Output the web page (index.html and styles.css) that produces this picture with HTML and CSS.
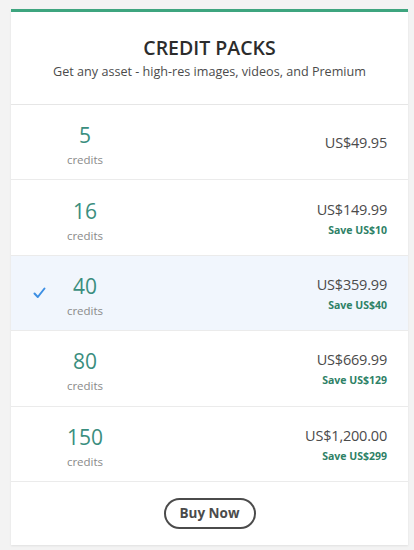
FILE: index.html
```html
<!DOCTYPE html>
<html>
<head>
<meta charset="utf-8">
<link rel="stylesheet" href="styles.css">
</head>
<body>
<div class="card">
  <div class="header">
    <h1 class="title">CREDIT PACKS</h1>
    <p class="subtitle">Get any asset - high-res images, videos, and Premium</p>
  </div>
  <div class="row">
    <div class="qty"><span class="num">5</span><span class="unit">credits</span></div>
    <div class="price"><span class="amount">US$49.95</span></div>
  </div>
  <div class="row">
    <div class="qty"><span class="num">16</span><span class="unit">credits</span></div>
    <div class="price"><span class="amount">US$149.99</span><span class="save">Save US$10</span></div>
  </div>
  <div class="row selected">
    <svg class="check" width="13" height="12" viewBox="0 0 13 12"><path d="M1.5 6.5 L4.8 10 L11.5 1.5" fill="none" stroke="#3d8fe3" stroke-width="2" stroke-linecap="round" stroke-linejoin="round"/></svg>
    <div class="qty"><span class="num">40</span><span class="unit">credits</span></div>
    <div class="price"><span class="amount">US$359.99</span><span class="save">Save US$40</span></div>
  </div>
  <div class="row">
    <div class="qty"><span class="num">80</span><span class="unit">credits</span></div>
    <div class="price"><span class="amount">US$669.99</span><span class="save">Save US$129</span></div>
  </div>
  <div class="row">
    <div class="qty"><span class="num">150</span><span class="unit">credits</span></div>
    <div class="price"><span class="amount">US$1,200.00</span><span class="save">Save US$299</span></div>
  </div>
  <div class="footer">
    <button class="buy">Buy Now</button>
  </div>
</div>
</body>
</html>
```
FILE: styles.css
```css
html, body {
  margin: 0;
  padding: 0;
}
body {
  background: #f3f3f3;
  font-family: "Open Sans", "Liberation Sans", sans-serif;
  color: #4b4b4b;
  padding: 9px 6px 5px 11px;
}
.card {
  background: #fff;
  border-top: 3px solid #3ea57f;
  box-shadow: 0 1px 2px rgba(0,0,0,0.08);
}
.header {
  height: 93px;
  box-sizing: border-box;
  padding-top: 23px;
  text-align: center;
  border-bottom: 1px solid #e6e6e6;
}
.title {
  margin: 0;
  font-size: 19.5px;
  font-weight: 600;
  line-height: 26px;
  color: #2c2c2c;
}
.subtitle {
  margin: 1px 0 0;
  font-size: 12.6px;
  line-height: 20px;
  color: #4b4b4b;
}
.row {
  position: relative;
  height: 75.4px;
  box-sizing: border-box;
  border-bottom: 1px solid #ebebeb;
  display: flex;
  align-items: center;
  justify-content: space-between;
}
.row.selected {
  background: #f1f6fd;
}
.check {
  position: absolute;
  left: 22px;
  top: 31px;
}
.qty {
  width: 148px;
  display: flex;
  flex-direction: column;
  align-items: center;
  padding-top: 6px;
}
.num {
  font-size: 21px;
  line-height: 28px;
  color: #3a8e7e;
}
.unit {
  font-size: 11.5px;
  line-height: 18px;
  padding-top: 2px;
  color: #8a8a8a;
}
.price {
  display: flex;
  flex-direction: column;
  align-items: flex-end;
  padding-right: 21px;
  padding-top: 2px;
}
.amount {
  font-size: 14.5px;
  line-height: 22px;
  color: #4b4b4b;
  letter-spacing: -0.2px;
}
.save {
  font-size: 10.5px;
  font-weight: 700;
  line-height: 18px;
  color: #2e8166;
}
.footer {
  height: 63px;
  display: flex;
  align-items: center;
  justify-content: center;
}
.buy {
  font-family: inherit;
  width: 92px;
  height: 31px;
  border: 2px solid #4b4b4b;
  border-radius: 16px;
  background: #fff;
  color: #4b4b4b;
  font-size: 13.5px;
  font-weight: 700;
  padding: 0;
}
```
